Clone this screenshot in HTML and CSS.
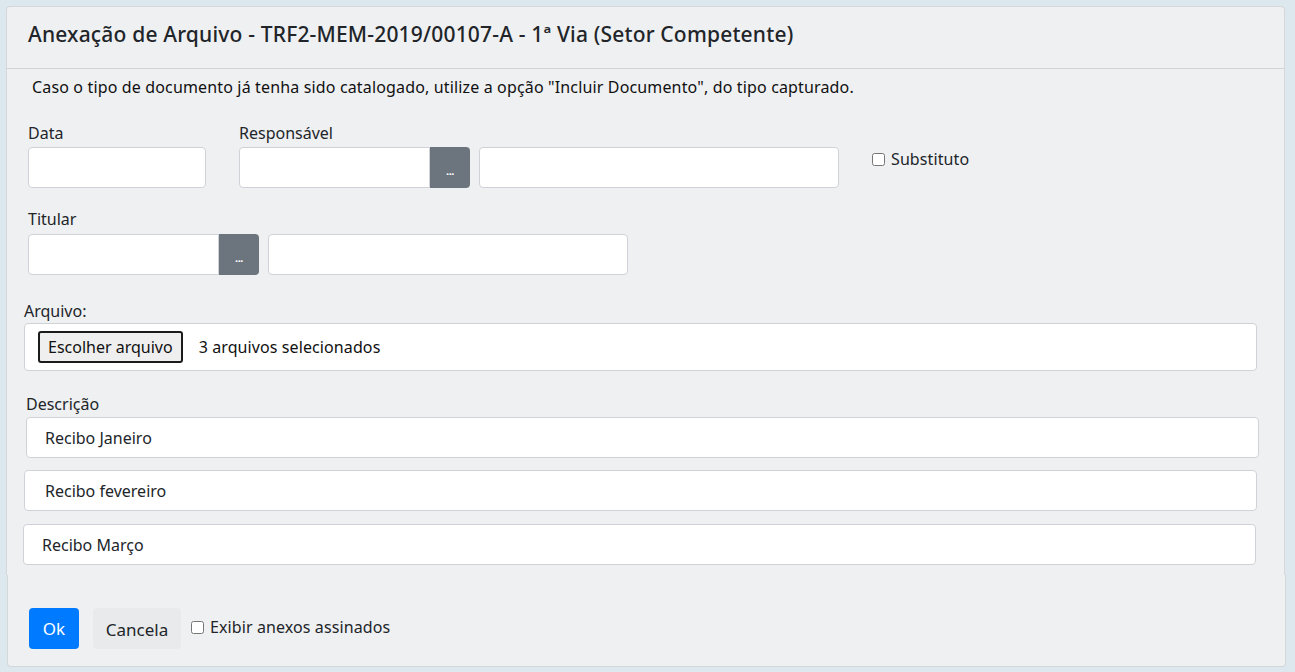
FILE: index.html
```html
<!DOCTYPE html>
<html lang="pt-BR">
<head>
<meta charset="utf-8">
<title>Anexação de Arquivo</title>
<link rel="stylesheet" href="styles.css">
</head>
<body>
<div class="card">
  <div class="card-header">
    <h1 class="title">Anexação de Arquivo - TRF2-MEM-2019/00107-A - 1ª Via (Setor Competente)</h1>
  </div>
  <div class="card-body">
    <p class="info">Caso o tipo de documento já tenha sido catalogado, utilize a opção "Incluir Documento", do tipo capturado.</p>

    <div class="row row-1">
      <div class="field field-data">
        <label class="lbl">Data</label>
        <input class="ctl ctl-data" type="text">
      </div>
      <div class="field field-resp">
        <label class="lbl">Responsável</label>
        <div class="pick">
          <input class="ctl ctl-sigla" type="text">
          <button class="btn-dots" type="button">...</button>
          <input class="ctl ctl-nome" type="text">
        </div>
      </div>
      <label class="check check-subst"><input type="checkbox"> Substituto</label>
    </div>

    <div class="row row-2">
      <div class="field field-tit">
        <label class="lbl">Titular</label>
        <div class="pick">
          <input class="ctl ctl-sigla" type="text">
          <button class="btn-dots" type="button">...</button>
          <input class="ctl ctl-nome" type="text">
        </div>
      </div>
    </div>

    <div class="block block-arq">
      <label class="lbl lbl-arq">Arquivo:</label>
      <div class="filebox">
        <span class="file-btn">Escolher arquivo</span>
        <span class="file-txt">3 arquivos selecionados</span>
      </div>
    </div>

    <div class="block block-desc">
      <label class="lbl lbl-desc">Descrição</label>
      <input class="ctl desc desc-1" type="text" value="Recibo Janeiro">
      <input class="ctl desc desc-2" type="text" value="Recibo fevereiro">
      <input class="ctl desc desc-3" type="text" value="Recibo Março">
    </div>
  </div>
  <div class="card-footer">
    <button class="btn btn-ok" type="button">Ok</button>
    <button class="btn btn-cancel" type="button">Cancela</button>
    <label class="check check-anexos"><input type="checkbox"> Exibir anexos assinados</label>
  </div>
</div>
</body>
</html>
```
FILE: styles.css
```css
* { box-sizing: border-box; }
html, body { margin: 0; padding: 0; }
body {
  background: #dce8ed;
  font-family: "Noto Sans", "Open Sans", sans-serif;
  font-size: 16px;
  color: #212529;
  padding: 6px 0 0 6px;
  width: 1295px;
  height: 672px;
  overflow: hidden;
}
.card {
  width: 1279px;
}
.card-header {
  background: #eff0f2;
  border: 1px solid #d5d7da;
  border-bottom-color: #d2d3d5;
  border-radius: 4px 4px 0 0;
  height: 63px;
  padding: 0 0 7px 21px;
  display: flex;
  align-items: center;
}
.title {
  margin: 0;
  font-size: 21px;
  font-weight: 500;
  letter-spacing: 0.18px;
  color: #212529;
  line-height: 24px;
}
.card-body {
  background: #eff0f2;
  border-left: 1px solid #d5d7da;
  border-right: 1px solid #d5d7da;
  width: 1279px;
  padding: 6px 0 10px 0;
}
.info {
  margin: 0 0 0 25px;
  font-size: 16px;
  letter-spacing: 0.15px;
  line-height: 24px;
  color: #111;
}
.lbl {
  display: block;
  font-size: 16px;
  line-height: 24px;
  color: #212529;
}
.row {
  display: flex;
  align-items: flex-start;
}
.row-1 { margin-top: 22px; padding-left: 21px; }
.row-2 { margin-top: 19px; padding-left: 21px; }
.field .lbl { margin-bottom: 2px; }
.row-2 .field .lbl { margin-bottom: 3px; }
.ctl {
  display: block;
  height: 41px;
  background: #fff;
  border: 1px solid #cfd3d8;
  border-radius: 4px;
  font-family: inherit;
  font-size: 16px;
  color: #212529;
  padding: 0 18px;
  outline: none;
}
.ctl-data { width: 178px; }
.field-resp { margin-left: 33px; }
.pick { display: flex; align-items: stretch; }
.ctl-sigla {
  width: 191px;
  border-radius: 4px 0 0 4px;
}
.btn-dots {
  width: 40px;
  height: 41px;
  border: 0;
  background: #6c757d;
  color: #fff;
  border-radius: 0 4px 4px 0;
  font-family: inherit;
  font-size: 11px;
  font-weight: 700;
  padding: 6px 0 0 0;
  letter-spacing: -0.5px;
}
.ctl-nome {
  width: 360px;
  margin-left: 9px;
}
.check {
  display: flex;
  align-items: center;
  gap: 6px;
  font-size: 16px;
  color: #212529;
}
.check input {
  width: 13px;
  height: 13px;
  margin: 0;
}
.check-subst {
  margin-left: 33px;
  margin-top: 27px;
  letter-spacing: 0.1px;
}
.block { padding-left: 17px; }
.block-arq { margin-top: 24px; }
.filebox {
  width: 1233px;
  height: 48px;
  background: #fff;
  border: 1px solid #cfd3d8;
  border-radius: 4px;
  display: flex;
  align-items: center;
  padding-left: 13px;
}
.file-btn {
  display: inline-block;
  height: 32px;
  line-height: 28px;
  border: 2px solid #1b1b1b;
  border-radius: 3px;
  background: #efefef;
  padding: 0 8px;
  font-size: 16px;
  color: #111;
}
.file-txt {
  margin-left: 16px;
  letter-spacing: 0.1px;
  color: #111;
}
.block-desc { margin-top: 21px; }
.lbl-desc { margin-left: 2px; }
.desc { width: 1233px; }
.desc-1 { margin-left: 2px; margin-top: 1px; }
.desc-2 { margin-top: 12px; padding-left: 20px; }
.desc-3 { margin-top: 13px; margin-left: -1px; padding-left: 18px; }
.card-footer {
  width: 1279px;
  margin-left: 1px;
  background: #eff0f2;
  border: 1px solid #d5d7da;
  border-top: 0;
  border-radius: 0 0 4px 4px;
  height: 92px;
  display: flex;
  align-items: center;
  padding: 33px 0 18px 21px;
}
.btn {
  height: 41px;
  border: 0;
  border-radius: 4px;
  font-family: inherit;
  font-size: 17px;
  padding: 0;
}
.btn-ok {
  width: 50px;
  background: #007bff;
  color: #fff;
}
.btn-cancel {
  width: 88px;
  margin-left: 14px;
  background: #e9eaec;
  color: #212529;
  padding-top: 3px;
}
.check-anexos {
  margin-left: 10px;
  margin-top: -2px;
  letter-spacing: 0.1px;
}
```
